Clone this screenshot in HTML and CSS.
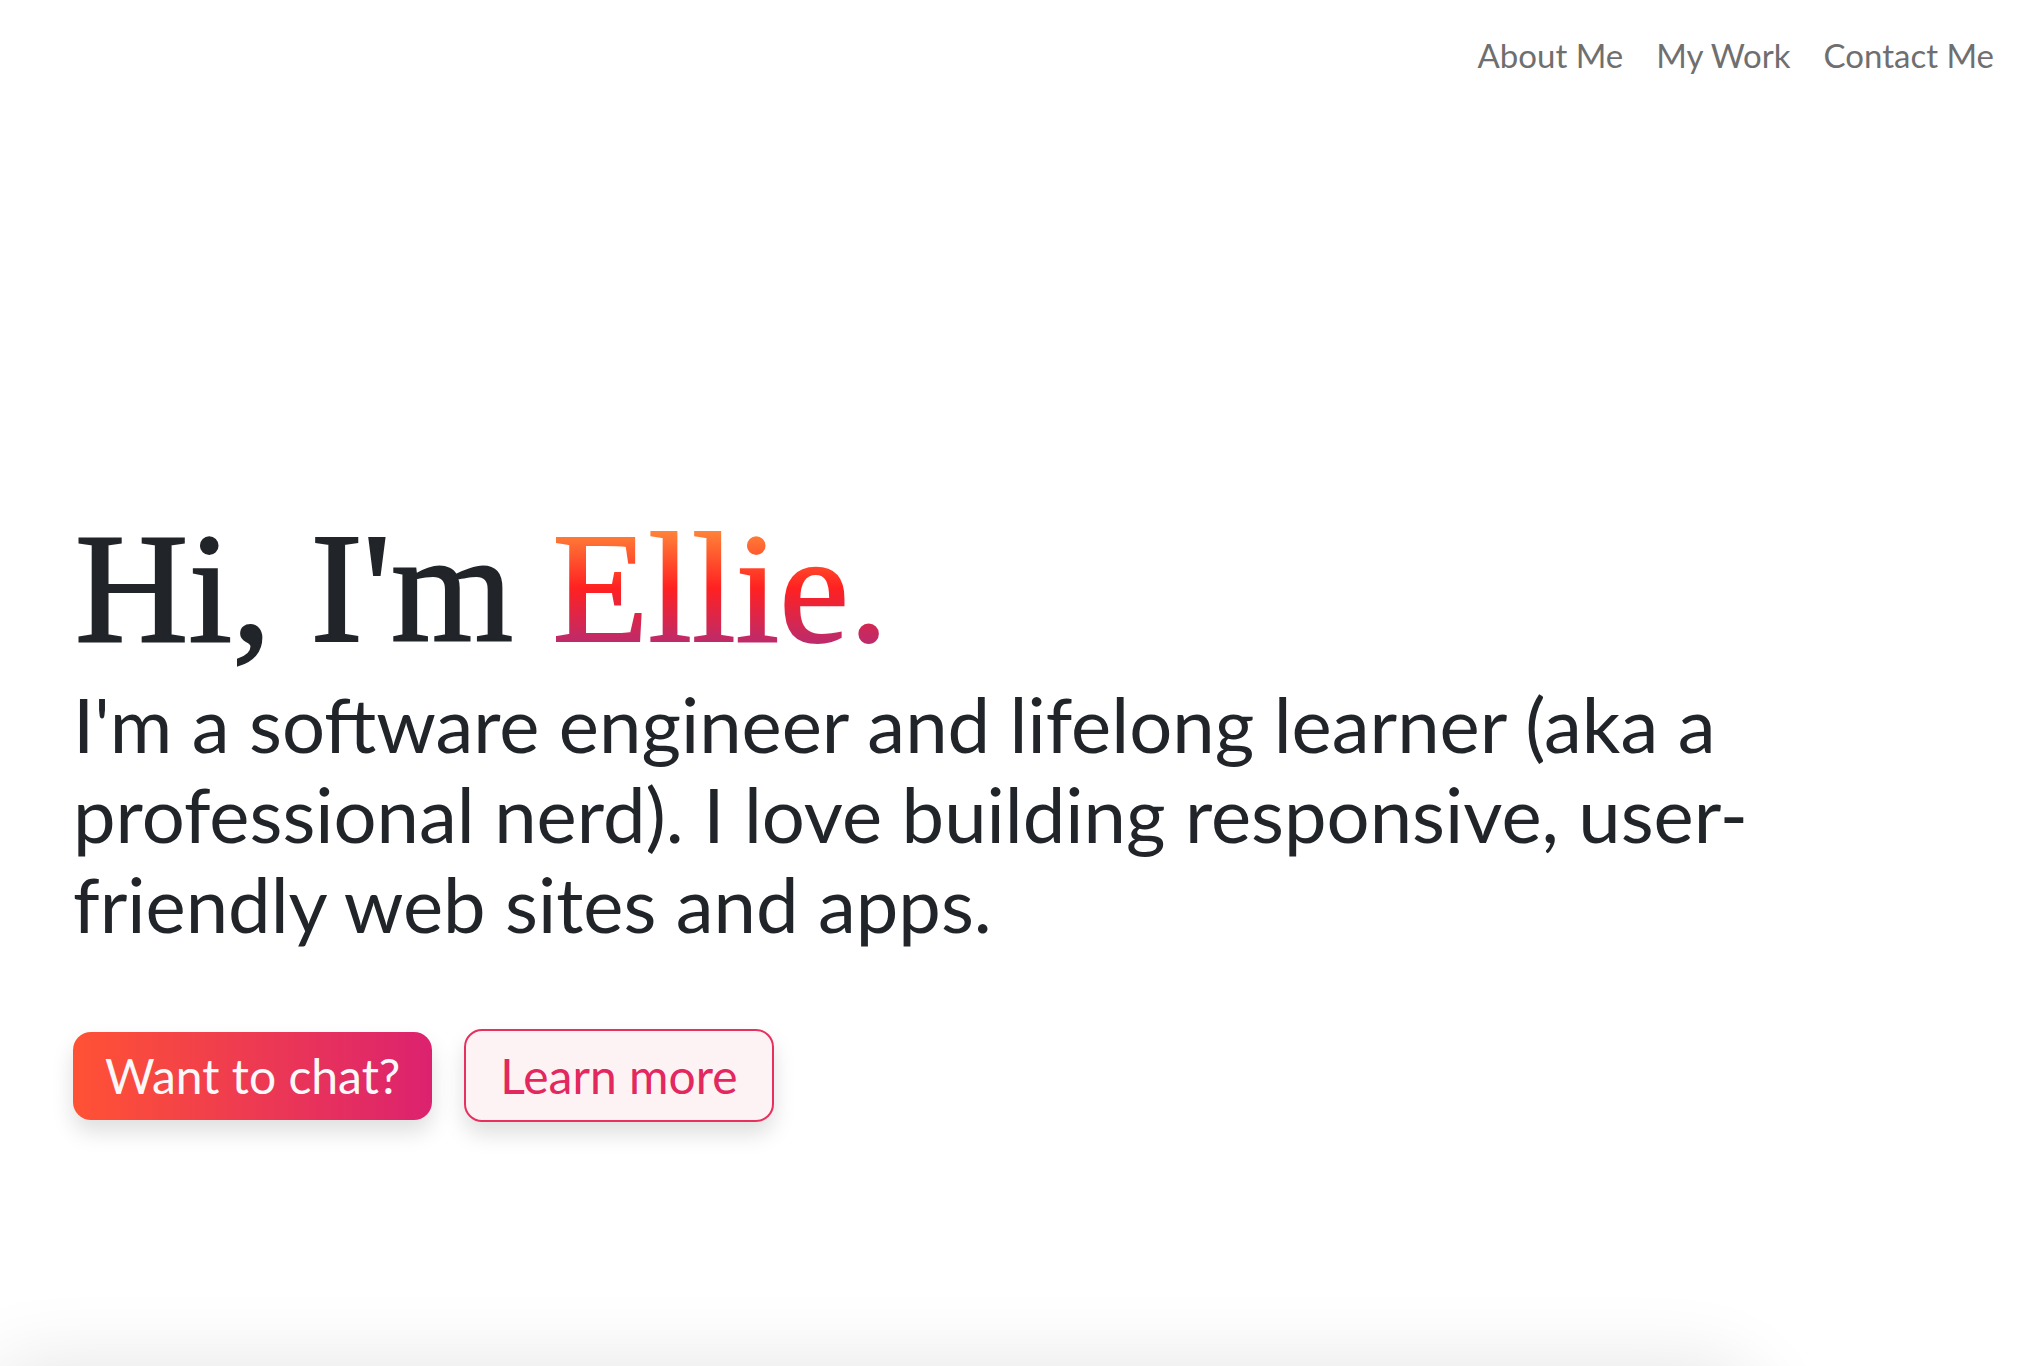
FILE: index.html
```html
<!DOCTYPE html>
<html lang="en">
<head>
<meta charset="utf-8">
<title>Ellie</title>
<link rel="stylesheet" href="styles.css">
</head>
<body>
<div class="screen">
  <nav class="nav">
    <a href="#about" class="nav-link">About Me</a>
    <a href="#work" class="nav-link">My Work</a>
    <a href="#contact" class="nav-link">Contact Me</a>
  </nav>
  <main class="hero">
    <h1 class="title">Hi, I'm <span class="name">Ellie.</span></h1>
    <p class="intro">I'm a software engineer and lifelong learner (aka a professional nerd). I love building responsive, user-friendly web sites and apps.</p>
    <div class="actions">
      <a href="#contact" class="btn btn-primary">Want to chat?</a>
      <a href="#about" class="btn btn-outline">Learn more</a>
    </div>
  </main>
</div>
<section class="next" id="about"></section>
</body>
</html>
```

FILE: styles.css
```css
html, body {
  margin: 0;
  padding: 0;
  background: #ffffff;
}
body {
  font-family: Lato, "Open Sans", sans-serif;
  color: #212529;
  overflow-x: hidden;
}
.screen {
  height: 1366px;
  display: flex;
  flex-direction: column;
}
.nav {
  display: flex;
  justify-content: flex-end;
  gap: 33px;
  padding: 35px 24px 0 0;
}
.nav-link {
  font-size: 33px;
  line-height: 40px;
  color: #6f6f6f;
  text-decoration: none;
}
.hero {
  padding: 435px 0 0 73px;
}
.title {
  margin: 0 0 0 2px;
  font-family: "Liberation Serif", serif;
  font-weight: 400;
  font-size: 157px;
  line-height: 1;
  color: #212529;
  -webkit-text-stroke: 2px #212529;
}
.name {
  background: linear-gradient(180deg, #ff8a3a 15%, #ff2121 50%, #b52c74 85%);
  -webkit-background-clip: text;
  background-clip: text;
  color: transparent;
  -webkit-text-stroke: 2px transparent;
}
.intro {
  margin: 12px 0 0 0;
  max-width: 1800px;
  font-size: 76px;
  line-height: 90px;
  color: #212529;
}
.actions {
  display: flex;
  align-items: center;
  gap: 32px;
  margin-top: 80px;
}
.btn {
  display: inline-flex;
  align-items: center;
  justify-content: center;
  box-sizing: border-box;
  font-size: 48px;
  text-decoration: none;
  border-radius: 18px;
  box-shadow: 0 12px 22px rgba(0, 0, 0, 0.13);
}
.btn-primary {
  height: 88px;
  padding: 0 32px;
  color: #fbf8f9;
  background: linear-gradient(90deg, #ff5234 0%, #dc226f 100%);
}
.btn-outline {
  height: 93px;
  padding: 0 34px;
  color: #e3285f;
  background: #fdf3f5;
  border: 2.5px solid #e8305f;
}
.next {
  width: 1760px;
  height: 600px;
  border-radius: 0 60px 0 0;
  background: #ffffff;
  box-shadow: 0 0 80px rgba(0, 0, 0, 0.11);
}
```
